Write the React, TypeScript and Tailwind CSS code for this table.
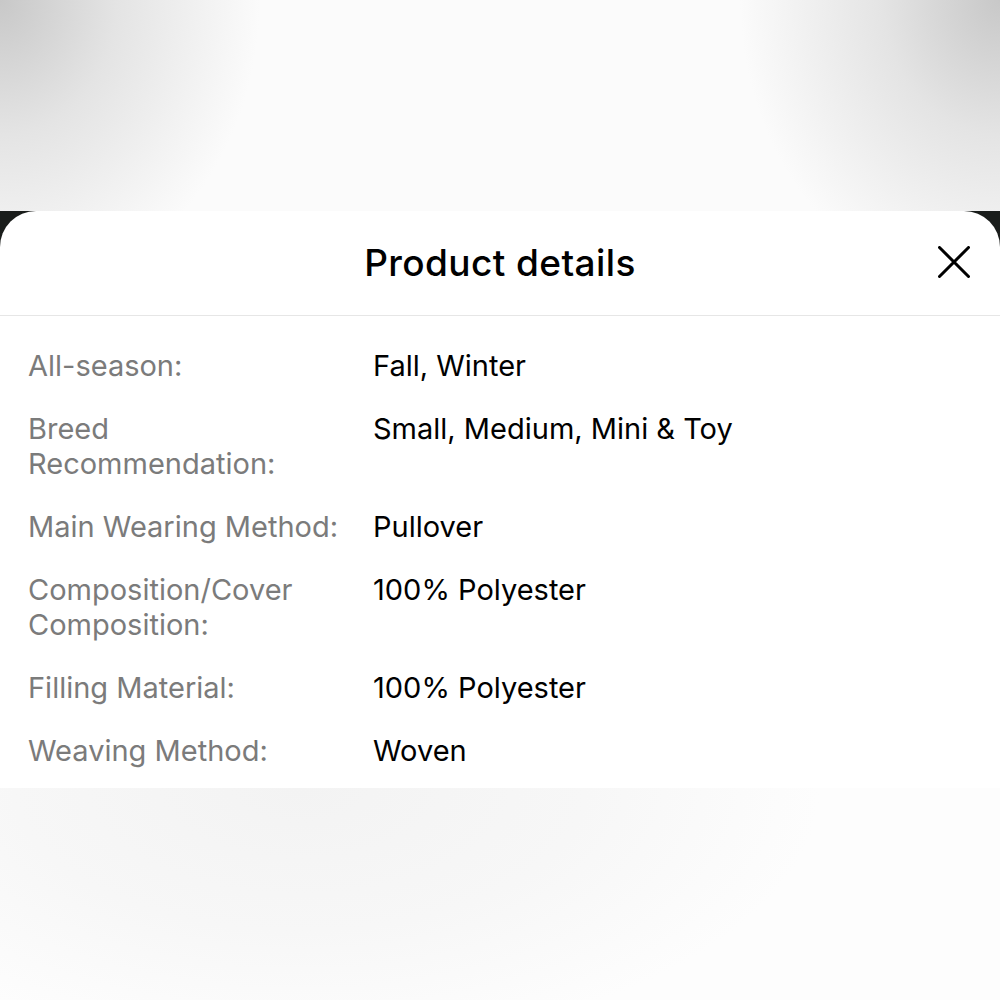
const details = [
  { label: "All-season:", value: "Fall, Winter" },
  { label: "Breed Recommendation:", value: "Small, Medium, Mini & Toy" },
  { label: "Main Wearing Method:", value: "Pullover" },
  { label: "Composition/Cover Composition:", value: "100% Polyester" },
  { label: "Filling Material:", value: "100% Polyester" },
  { label: "Weaving Method:", value: "Woven" },
];

const App = () => {
  return (
    <div className="w-[1000px] h-[1000px] flex flex-col overflow-hidden font-['Inter','Liberation_Sans',sans-serif]">
      {/* blurred page behind the sheet */}
      <div className="h-[211px] shrink-0 bg-[#fbfbfb] bg-[radial-gradient(ellipse_260px_300px_at_0%_0%,#c8c8c8,#e4e4e4_45%,transparent_100%),radial-gradient(ellipse_260px_300px_at_100%_0%,#c8c8c8,#e4e4e4_45%,transparent_100%)]" />

      {/* sheet */}
      <div className="shrink-0 bg-[#1a1d1b]">
        <div className="bg-white rounded-t-[36px]">
          <div className="relative h-[105px] flex items-center justify-center border-b border-[#e6e6e6]">
            <h1 className="text-[37px] font-medium text-black tracking-[0.4px]">Product details</h1>
            <button className="absolute left-[938px] top-[35px] text-black">
              <svg width="32" height="32" viewBox="0 0 32 32" fill="none" stroke="currentColor" strokeWidth="3" strokeLinecap="round">
                <path d="M1.5 1.5 L30.5 30.5 M30.5 1.5 L1.5 30.5" />
              </svg>
            </button>
          </div>
          <div className="grid grid-cols-[321px_1fr] gap-x-[24px] gap-y-[28px] px-[28px] pt-[32px] pb-[20px] text-[29px] leading-[35px]">
            {details.map((d) => (
              <div key={d.label} className="contents">
                <div className="text-[#7b7b7b]">{d.label}</div>
                <div className="text-black">{d.value}</div>
              </div>
            ))}
          </div>
        </div>
      </div>

      <div className="flex-1 bg-[#fdfdfd] bg-[radial-gradient(ellipse_520px_260px_at_30%_0%,#f3f3f3,#f7f7f7_55%,transparent_100%)]" />
    </div>
  );
};

export default App;
